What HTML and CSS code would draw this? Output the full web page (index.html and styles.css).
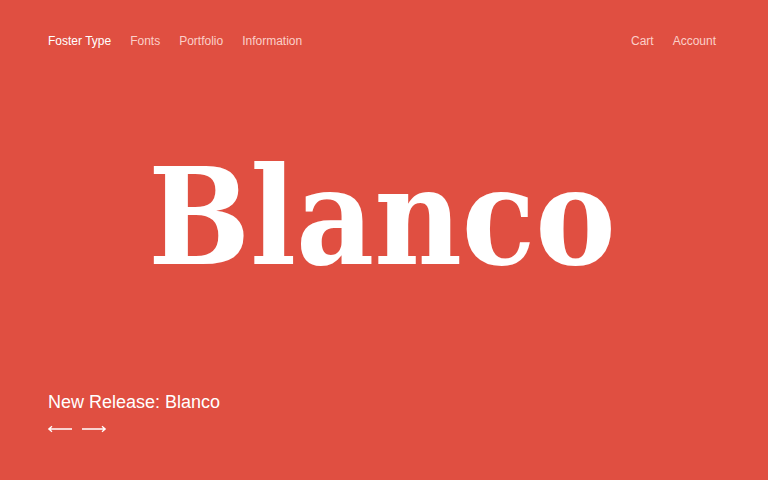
FILE: index.html
```html
<!DOCTYPE html>
<html>
<head>
<meta charset="utf-8">
<link rel="stylesheet" href="styles.css">
</head>
<body>
<div class="page">
  <header class="nav">
    <nav class="nav-left">
      <a class="brand" href="#">Foster Type</a>
      <a href="#">Fonts</a>
      <a href="#">Portfolio</a>
      <a href="#">Information</a>
    </nav>
    <nav class="nav-right">
      <a href="#">Cart</a>
      <a href="#">Account</a>
    </nav>
  </header>
  <main class="hero">
    <h1 class="title">Blanco</h1>
  </main>
  <footer class="release">
    <p class="release-text">New Release: Blanco</p>
    <div class="arrows">
      <svg width="26" height="8" viewBox="0 0 26 8"><path d="M25 4H2M5 1.3L1.8 4L5 6.7" fill="none" stroke="#fff" stroke-width="1.3"/></svg>
      <svg width="26" height="8" viewBox="0 0 26 8"><path d="M1 4H24M21 1.3L24.2 4L21 6.7" fill="none" stroke="#fff" stroke-width="1.3"/></svg>
    </div>
  </footer>
</div>
</body>
</html>
```
FILE: styles.css
```css
html, body {
  margin: 0;
  padding: 0;
  background: #e04f41;
}
.page {
  width: 768px;
  height: 480px;
  box-sizing: border-box;
  padding: 0 52px 0 48px;
  display: flex;
  flex-direction: column;
  font-family: "Liberation Sans", Arial, sans-serif;
  color: #fff;
}
.nav {
  display: flex;
  justify-content: space-between;
  align-items: center;
  height: 81px;
  flex: none;
}
.nav a {
  color: #fbd0c9;
  text-decoration: none;
  font-size: 12px;
}
.nav .brand {
  color: #fff;
}
.nav-left, .nav-right {
  display: flex;
  gap: 19px;
}
.hero {
  flex: 1;
  display: flex;
  justify-content: center;
  align-items: center;
}
.title {
  margin: 0;
  font-family: "DejaVu Serif", "Liberation Serif", serif;
  font-stretch: condensed;
  font-weight: 700;
  font-size: 134px;
  line-height: 1;
  color: #fff;
  padding-bottom: 38px;
}
.release {
  height: 89px;
  flex: none;
}
.release-text {
  margin: 0;
  font-size: 18px;
  line-height: 22px;
}
.arrows {
  display: flex;
  gap: 8px;
  margin-top: 12px;
  margin-left: -1px;
}
.arrows svg {
  display: block;
}
```
